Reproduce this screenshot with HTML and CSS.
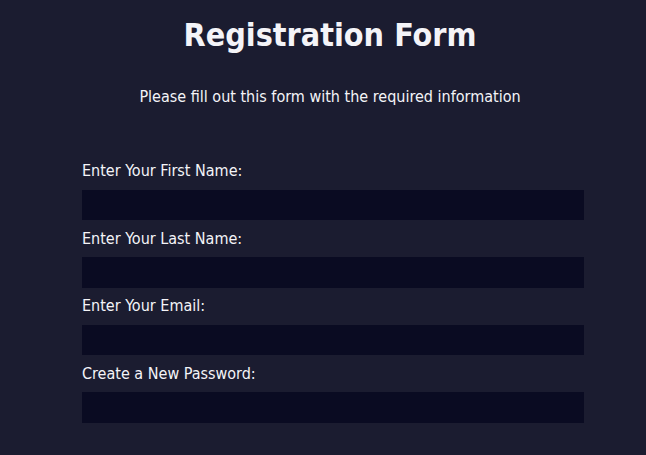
FILE: index.html
```html
<!DOCTYPE html>
<html>
<head>
<meta charset="utf-8">
<link rel="stylesheet" href="styles.css">
</head>
<body>
<div class="page">
  <h1 class="title">Registration Form</h1>
  <p class="subtitle">Please fill out this form with the required information</p>
  <form class="form">
    <div class="field">
      <label class="label" for="first">Enter Your First Name:</label>
      <input class="input" id="first" type="text">
    </div>
    <div class="field">
      <label class="label" for="last">Enter Your Last Name:</label>
      <input class="input" id="last" type="text">
    </div>
    <div class="field">
      <label class="label" for="email">Enter Your Email:</label>
      <input class="input" id="email" type="email">
    </div>
    <div class="field">
      <label class="label" for="pw">Create a New Password:</label>
      <input class="input" id="pw" type="password">
    </div>
  </form>
</div>
</body>
</html>
```
FILE: styles.css
```css
html, body {
  margin: 0;
  padding: 0;
  background: #1b1c30;
  height: 100%;
  overflow: hidden;
}
body {
  font-family: Tahoma, "DejaVu Sans Condensed", "DejaVu Sans", sans-serif;
  color: #f4f4f8;
}
.page {
  margin-left: 14px;
  display: flex;
  flex-direction: column;
  align-items: center;
}
.title {
  margin: 14px 0 0;
  font-size: 32px;
  font-weight: bold;
  line-height: 42px;
}
.subtitle {
  margin: 31px 0 0;
  font-size: 16px;
  line-height: 20px;
}
.form {
  width: 502px;
  margin-top: 54px;
  margin-left: 68px;
  align-self: flex-start;
  display: flex;
  flex-direction: column;
}
.field {
  display: flex;
  flex-direction: column;
  gap: 8.5px;
  margin-bottom: 8.5px;
}
.label {
  font-size: 16px;
  line-height: 20px;
}
.input {
  box-sizing: border-box;
  height: 30.67px;
  width: 100%;
  margin: 0;
  border: none;
  background: #0a0b22;
  color: #fff;
  outline: none;
}
```
